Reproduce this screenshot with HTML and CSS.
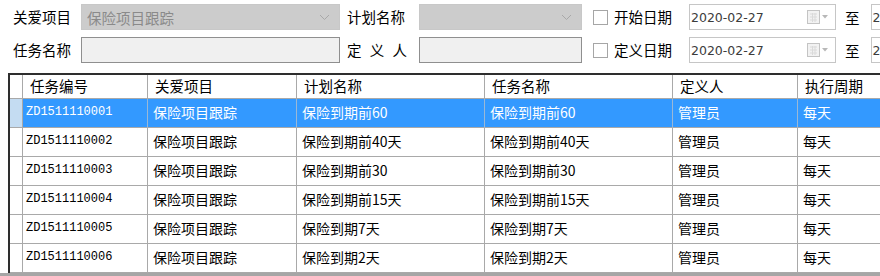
FILE: index.html
```html
<!doctype html>
<html>
<head>
<meta charset="utf-8">
<link rel="stylesheet" href="styles.css">
<title>任务查询</title>
</head>
<body>
<div class="filters">
  <div class="filter-row">
    <span class="lbl">关爱项目</span>
    <div class="combo combo-wide"><span class="combo-text">保险项目跟踪</span><svg class="chev" width="11" height="7" viewBox="0 0 11 7"><polyline points="1,1 5.5,5.5 10,1" fill="none" stroke="#a8a8a8" stroke-width="1"/></svg></div>
    <span class="lbl lbl-mid">计划名称</span>
    <div class="combo combo-narrow"><span class="combo-text"></span><svg class="chev" width="11" height="7" viewBox="0 0 11 7"><polyline points="1,1 5.5,5.5 10,1" fill="none" stroke="#a8a8a8" stroke-width="1"/></svg></div>
    <span class="check"></span>
    <span class="lbl">开始日期</span>
    <div class="date"><span class="date-text">2020-02-27</span><svg class="cal" width="22" height="14" viewBox="0 0 22 14"><rect x="0.5" y="0.5" width="12" height="13" fill="#f2f2f2" stroke="#c4c4c4"/><path d="M3 4h7M3 7h7M3 10h7M5.5 3v9M8 3v9" stroke="#dadada" stroke-width="1"/><polygon points="15,5 21,5 18,8.5" fill="#b8b8b8"/></svg></div>
    <span class="to">至</span>
    <div class="date date-cut"><span class="date-text">2</span></div>
  </div>
  <div class="filter-row">
    <span class="lbl">任务名称</span>
    <div class="input combo-wide"></div>
    <span class="lbl lbl-mid lbl-spread">定 义 人</span>
    <div class="input combo-narrow"></div>
    <span class="check"></span>
    <span class="lbl">定义日期</span>
    <div class="date"><span class="date-text">2020-02-27</span><svg class="cal" width="22" height="14" viewBox="0 0 22 14"><rect x="0.5" y="0.5" width="12" height="13" fill="#f2f2f2" stroke="#c4c4c4"/><path d="M3 4h7M3 7h7M3 10h7M5.5 3v9M8 3v9" stroke="#dadada" stroke-width="1"/><polygon points="15,5 21,5 18,8.5" fill="#b8b8b8"/></svg></div>
    <span class="to">至</span>
    <div class="date date-cut"><span class="date-text">2</span></div>
  </div>
</div>

<div class="grid">
  <div class="grid-row grid-head">
    <div class="cell rowhead"></div>
    <div class="cell">任务编号</div>
    <div class="cell">关爱项目</div>
    <div class="cell">计划名称</div>
    <div class="cell">任务名称</div>
    <div class="cell">定义人</div>
    <div class="cell">执行周期</div>
  </div>
  <div class="grid-row selected">
    <div class="cell rowhead"></div>
    <div class="cell code">ZD1511110001</div>
    <div class="cell">保险项目跟踪</div>
    <div class="cell">保险到期前60</div>
    <div class="cell">保险到期前60</div>
    <div class="cell">管理员</div>
    <div class="cell">每天</div>
  </div>
  <div class="grid-row">
    <div class="cell rowhead"></div>
    <div class="cell code">ZD1511110002</div>
    <div class="cell">保险项目跟踪</div>
    <div class="cell">保险到期前40天</div>
    <div class="cell">保险到期前40天</div>
    <div class="cell">管理员</div>
    <div class="cell">每天</div>
  </div>
  <div class="grid-row">
    <div class="cell rowhead"></div>
    <div class="cell code">ZD1511110003</div>
    <div class="cell">保险项目跟踪</div>
    <div class="cell">保险到期前30</div>
    <div class="cell">保险到期前30</div>
    <div class="cell">管理员</div>
    <div class="cell">每天</div>
  </div>
  <div class="grid-row">
    <div class="cell rowhead"></div>
    <div class="cell code">ZD1511110004</div>
    <div class="cell">保险项目跟踪</div>
    <div class="cell">保险到期前15天</div>
    <div class="cell">保险到期前15天</div>
    <div class="cell">管理员</div>
    <div class="cell">每天</div>
  </div>
  <div class="grid-row">
    <div class="cell rowhead"></div>
    <div class="cell code">ZD1511110005</div>
    <div class="cell">保险项目跟踪</div>
    <div class="cell">保险到期7天</div>
    <div class="cell">保险到期7天</div>
    <div class="cell">管理员</div>
    <div class="cell">每天</div>
  </div>
  <div class="grid-row">
    <div class="cell rowhead"></div>
    <div class="cell code">ZD1511110006</div>
    <div class="cell">保险项目跟踪</div>
    <div class="cell">保险到期2天</div>
    <div class="cell">保险到期2天</div>
    <div class="cell">管理员</div>
    <div class="cell">每天</div>
  </div>
</div>
<div class="grid-foot"></div>
</body>
</html>
```

FILE: styles.css
```css
html,
body {
    margin: 0;
    padding: 0;
}
body {
    width: 880px;
    height: 276px;
    overflow: hidden;
    background: #fff;
    color: #000;
    font-family: "Noto Sans CJK SC", "Liberation Sans", sans-serif;
    font-size: 15px;
}
.filters {
    padding: 4px 0 0 13px;
    display: flex;
    flex-direction: column;
    gap: 7px;
}
.filter-row {
    display: flex;
    align-items: center;
    height: 26px;
    white-space: nowrap;
}
.filter-row > * {
    flex-shrink: 0;
}
.lbl {
    width: 60px;
    font-size: 14.5px;
    line-height: 26px;
}
.lbl-mid {
    margin-left: 7px;
}
.lbl-spread {
    text-align: justify;
    text-align-last: justify;
}
.combo,
.input {
    box-sizing: border-box;
    height: 26px;
    display: flex;
    align-items: center;
}
.combo {
    background: #cccccc;
    border: 1px solid #c8c8c8;
}
.input {
    background: #f0f0f0;
    border: 1px solid #8f8f8f;
}
.combo-wide {
    width: 259px;
    margin-left: 8px;
}
.combo-narrow {
    width: 163px;
    margin-left: 12px;
}
.combo-text {
    flex: 1;
    padding-left: 5px;
    color: #8a8a8a;
    font-size: 14.5px;
}
.chev {
    margin-right: 9px;
}
.check {
    box-sizing: border-box;
    width: 15px;
    height: 15px;
    border: 1px solid #a6a6a6;
    background: #fff;
    margin: 0 6px 0 11px;
}
.date {
    box-sizing: border-box;
    width: 147px;
    height: 26px;
    margin-left: 15px;
    border: 1px solid #c6c6c6;
    background: #fff;
    display: flex;
    align-items: center;
}
.date-text {
    flex: 1;
    padding-left: 1px;
    font-family: "DejaVu Sans", sans-serif;
    font-size: 12.5px;
    color: #3c3c3c;
}
.cal {
    margin-right: 6px;
}
.to {
    margin-left: 9px;
    font-size: 14.5px;
}
.date-cut {
    margin-left: 11px;
    width: 40px;
}
.grid {
    margin: 10px 0 0 8px;
    border-top: 2px solid #2e2e2e;
    border-left: 2px solid #2e2e2e;
    overflow: hidden;
}
.grid-row {
    display: grid;
    grid-template-columns: 13px 125px 149px 188px 188px 125px 120px;
    height: 29px;
}
.grid-head {
    height: 24px;
}
.cell {
    box-sizing: border-box;
    border-right: 1px solid #a9a9a9;
    border-bottom: 1px solid #a9a9a9;
    padding-left: 5px;
    font-size: 14px;
    line-height: 27px;
    white-space: nowrap;
    overflow: hidden;
}
.grid-head .cell {
    padding-left: 7px;
    font-size: 14.5px;
    line-height: 22px;
}
.cell.rowhead {
    padding: 0;
}
.cell.code {
    padding-left: 3px;
    font-family: "Liberation Mono", monospace;
    font-size: 12px;
}
.selected .cell {
    background: #3399ff;
    color: #fff;
    border-right-color: #9bb8d6;
}
.selected .cell.rowhead {
    background: #c4dcf2;
    border-right-color: #a9a9a9;
}
.grid-foot {
    height: 6px;
    background: #a6a6a6;
}
```
